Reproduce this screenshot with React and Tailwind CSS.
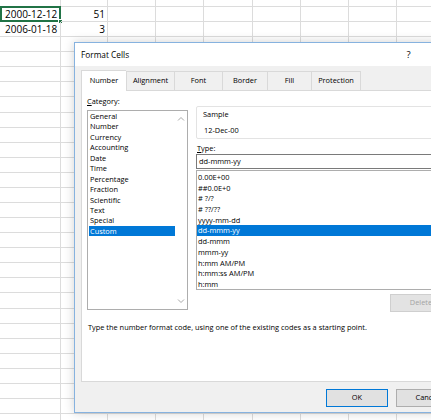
import React from 'react';

const colW = ['w-[61px]', 'w-[47px]', 'w-[48px]', 'w-[48px]', 'w-[49px]', 'w-[48px]', 'w-[48px]', 'w-[48px]', 'w-[48px]'];

const sheet = {
  1: ['2000-12-12', '51'],
  2: ['2006-01-18', '3'],
};

const categories = ['General', 'Number', 'Currency', 'Accounting', 'Date', 'Time', 'Percentage', 'Fraction', 'Scientific', 'Text', 'Special', 'Custom'];
const formats = ['0.00E+00', '##0.0E+0', '# ?/?', '# ??/??', 'yyyy-mm-dd', 'dd-mmm-yy', 'dd-mmm', 'mmm-yy', 'h:mm AM/PM', 'h:mm:ss AM/PM', 'h:mm'];
const tabs = [
  { label: 'Number', w: 'w-[45px]', active: true },
  { label: 'Alignment', w: 'w-[48px]' },
  { label: 'Font', w: 'w-[48px]' },
  { label: 'Border', w: 'w-[45px]' },
  { label: 'Fill', w: 'w-[44px]' },
  { label: 'Protection', w: 'w-[50px]' },
];

function Chevron({ up }) {
  return (
    <svg width="8" height="5" viewBox="0 0 8 5">
      <path d={up ? 'M1 4.5 L4 1.5 L7 4.5' : 'M1 0.5 L4 3.5 L7 0.5'} fill="none" stroke="#a8a8a8" strokeWidth="1" />
    </svg>
  );
}

function Sheet() {
  const rows = Array.from({ length: 29 }, (_, i) => i);
  return (
    <div className="flex flex-col font-['Open_Sans',sans-serif] text-[10px] text-black">
      {rows.map((r) => (
        <div key={r} className={`flex shrink-0 ${r === 0 ? 'h-[7px]' : 'h-[15.08px]'}`}>
          {colW.map((w, c) => (
            <div key={c} className={`${w} shrink-0 h-full border-r border-b border-[#dcdcdc] relative flex items-center`}>
              {sheet[r] && c === 0 && <span className="pl-[5px] leading-none">{sheet[r][0]}</span>}
              {sheet[r] && c === 1 && <span className="ml-auto pr-[2px] leading-none">{sheet[r][1]}</span>}
              {r === 1 && c === 0 && (
                <div className="absolute left-0 top-[-1px] w-[61px] h-[16px] border-2 border-[#217346]">
                  <div className="absolute right-[-4px] bottom-[-4px] w-[5px] h-[5px] bg-[#217346] border border-white" />
                </div>
              )}
            </div>
          ))}
        </div>
      ))}
    </div>
  );
}

function FormatCells() {
  return (
    <div className="absolute left-[74px] top-[42px] w-[391px] h-[371px] border border-[#86b2df] bg-[#f0f0f0] flex flex-col shadow-[0_0_10px_rgba(0,0,0,0.18)] font-['Open_Sans',sans-serif] text-black">
      {/* title bar */}
      <div className="h-[23px] shrink-0 bg-white flex items-center pt-[2px]">
        <span className="pl-[6px] text-[8.3px]">Format Cells</span>
        <div className="ml-auto w-[37px] text-center text-[9.5px]">?</div>
        <div className="w-[37px]" />
      </div>

      {/* tabs */}
      <div className="mt-[5px] ml-[6px] h-[19px] shrink-0 flex items-end text-[7.4px]">
        {tabs.map((t, i) => (
          <div
            key={t.label}
            className={`${t.w} flex items-center justify-center border-t border-l border-[#d9d9d9] ${i === tabs.length - 1 ? 'border-r' : ''} ${
              t.active ? 'h-[21px] -mb-px bg-white relative z-10' : 'h-[19px] bg-[#f0f0f0]'
            }`}
          >
            {t.label}
          </div>
        ))}
      </div>

      {/* panel */}
      <div className="mx-[6px] h-[292px] shrink-0 border border-[#d9d9d9] bg-white text-[7.4px]">
        <div className="flex px-[5px]">
          <div className="w-[101px] pt-[5px]">
            <div className="h-[10px] leading-[10px]">
              <span className="underline">C</span>ategory:
            </div>
            <div className="mt-[4px] h-[200px] border border-[#adadad] flex">
              <div className="flex-1 pl-[1px]">
                {categories.map((c) => (
                  <div key={c} className={`h-[10.45px] leading-[10.45px] pl-[1px] ${c === 'Custom' ? 'bg-[#0078d7] text-white' : ''}`}>
                    {c}
                  </div>
                ))}
              </div>
              <div className="w-[12px] flex flex-col items-center justify-between py-[5px]">
                <Chevron up />
                <Chevron />
              </div>
            </div>
          </div>

          <div className="ml-[8px] w-[256px] pt-[15px] flex flex-col">
            <div className="h-[33px] border border-[#e3e3e3] rounded-[2px] pl-[6px] pt-[2px]">
              <div className="h-[10px] leading-[10px]">Sample</div>
              <div className="mt-[6px] h-[10px] leading-[10px] pl-[1px]">12-Dec-00</div>
            </div>
            <div className="mt-[4px] h-[10px] leading-[10px] pl-[1px]">
              <span className="underline">T</span>ype:
            </div>
            <div className="mt-[1px] h-[15px] border border-[#7a7a7a] pl-[2px] flex items-center">dd-mmm-yy</div>
            <div className="mt-[1px] h-[120px] border border-[#adadad] pt-[1px]">
              {formats.map((f) => (
                <div key={f} className={`h-[10.7px] leading-[10.7px] pl-[1px] ${f === 'dd-mmm-yy' ? 'bg-[#0078d7] text-white' : ''}`}>
                  {f}
                </div>
              ))}
            </div>
            <div className="mt-[4px] self-end w-[62px] h-[18px] border border-[#cfcfcf] bg-[#e3e3e3] text-[#a3a3a3] flex items-center justify-center">
              Delete
            </div>
          </div>
        </div>
        <div className="mt-[10px] pl-[6px] h-[10px] leading-[10px]">
          Type the number format code, using one of the existing codes as a starting point.
        </div>
      </div>

      {/* footer */}
      <div className="flex-1 flex justify-end gap-[8px] pt-[7px] pr-[6px] text-[7.4px]">
        <div className="w-[62px] h-[18px] border border-[#0078d7] bg-[#e1e1e1] flex items-center justify-center">OK</div>
        <div className="w-[62px] h-[18px] border border-[#adadad] bg-[#e1e1e1] flex items-center justify-center">Cancel</div>
      </div>
    </div>
  );
}

export default function App() {
  return (
    <div className="relative w-[431px] h-[420px] overflow-hidden bg-white">
      <Sheet />
      <FormatCells />
    </div>
  );
}
